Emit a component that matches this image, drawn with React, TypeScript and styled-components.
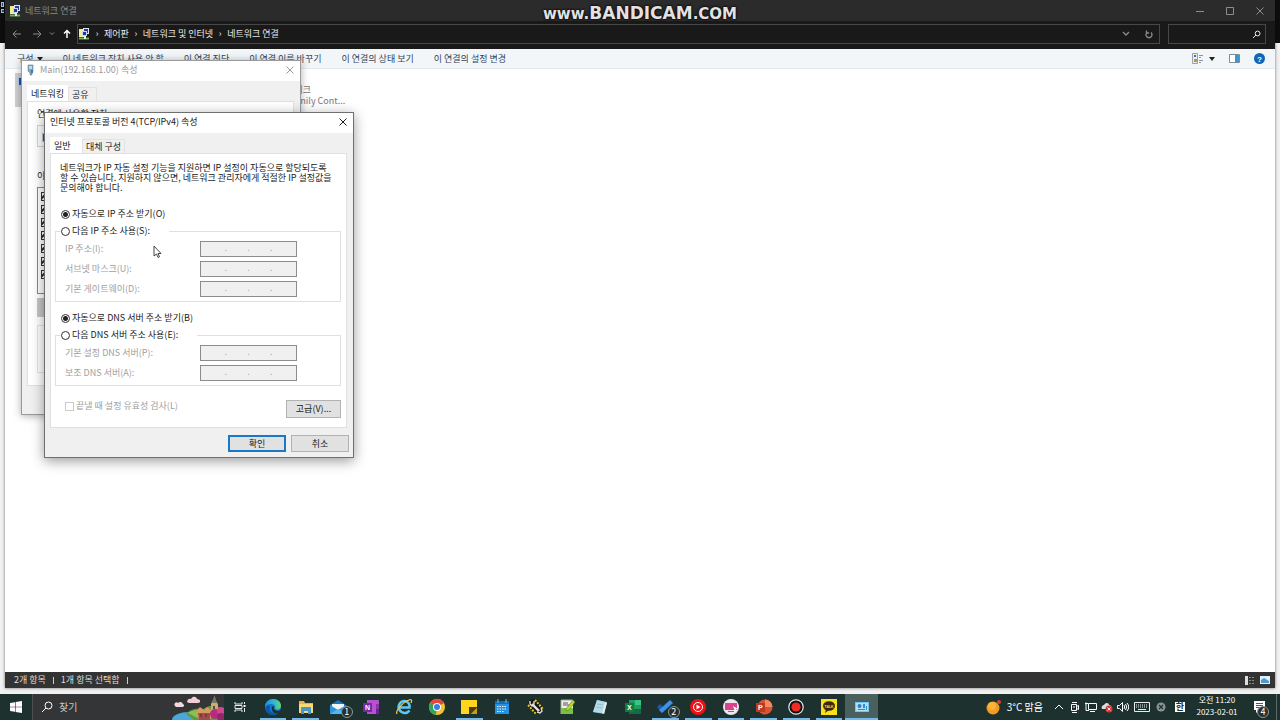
import React from "react";
import styled, { createGlobalStyle, css } from "styled-components";

const GlobalStyle = createGlobalStyle`
  *, *::before, *::after { box-sizing: border-box; }
  body {
    margin: 0;
    font-family: "Noto Sans CJK KR", "Noto Sans", sans-serif;
    font-size: 9px;
    line-height: 12px;
    color: #1a1a1a;
  }
  button, input { font: inherit; color: inherit; margin: 0; padding: 0; }
  button { background: none; border: 0; }
  svg { display: block; flex: none; }
`;

/* ---------- desktop ---------- */

const Desktop = styled.div`
  position: relative;
  min-height: 100vh;
  display: flex;
  flex-direction: column;
  overflow: hidden;
  background: linear-gradient(#0e0e0e 43px, #f1f1f2 43px);
`;

const DesktopSliver = styled.svg`
  position: absolute;
  left: 0;
  top: 1px;
`;

const Watermark = styled.div`
  position: absolute;
  z-index: 5;
  top: 3px;
  left: 0;
  right: 0;
  text-align: center;
  font-family: "DejaVu Sans", sans-serif;
  font-weight: bold;
  font-size: 15px;
  line-height: 20px;
  color: #e2e2e2;
  text-shadow: 0 0 3px #000, 0 0 2px #000;
  pointer-events: none;
`;

const WatermarkBrand = styled.span`
  font-size: 17px;
`;

/* ---------- explorer window ---------- */

const Explorer = styled.main`
  flex: 1;
  margin: 0 5px 6px;
  display: flex;
  flex-direction: column;
  background: #fff;
  box-shadow: 0 0 3px rgba(0, 0, 0, 0.55);
`;

const TitleBar = styled.header`
  height: 21px;
  display: flex;
  align-items: center;
  padding-left: 5px;
  gap: 4px;
  background: #2b2b2b;
  color: #8b8b8b;
`;

const Spacer = styled.div`
  flex: 1;
`;

const CaptionButtons = styled.div`
  display: flex;
`;

const CaptionButton = styled.button`
  width: 30px;
  height: 20px;
  display: grid;
  place-items: center;
  color: #8d8d8d;
`;

const AddressRow = styled.div`
  height: 28px;
  display: flex;
  align-items: center;
  padding: 0 9px 2px 2px;
  background: #191919;
  color: #e8e8e8;
`;

const NavButton = styled.button<{ $narrow?: boolean; $dim?: boolean }>`
  width: ${(p) => (p.$narrow ? 10 : 20)}px;
  height: 20px;
  display: grid;
  place-items: center;
  color: ${(p) => (p.$dim ? "#8c8c8c" : "#ffffff")};
`;

const AddressBox = styled.nav`
  flex: 1;
  height: 20px;
  display: flex;
  align-items: center;
  padding-left: 1px;
  gap: 3px;
  border: 1px solid #484848;
  margin-right: 8px;
`;

const Crumb = styled.a`
  color: inherit;
  text-decoration: none;
`;

const CrumbArrow = styled.span`
  width: 8px;
  text-align: center;
`;

const SearchBox = styled.label`
  width: 98px;
  height: 20px;
  display: flex;
  align-items: center;
  padding: 0 4px;
  border: 1px solid #484848;
`;

const BareInput = styled.input`
  flex: 1;
  min-width: 0;
  border: 0;
  outline: 0;
  background: transparent;
  &::placeholder { color: #c9c9c9; opacity: 1; }
`;

const CommandBar = styled.div`
  height: 20px;
  display: flex;
  align-items: center;
  gap: 20px;
  padding: 0 10px 0 12px;
  background: #f2f6f9;
  border-bottom: 1px solid #e6eaee;
  color: #33445c;
`;

const Command = styled.button<{ $gap?: number }>`
  display: flex;
  align-items: center;
  gap: ${(p) => p.$gap ?? 3}px;
  white-space: nowrap;
`;

const CommandIcons = styled.div`
  display: flex;
  align-items: center;
  gap: 14px;
`;

const ItemView = styled.section`
  flex: 1;
  display: flex;
  align-items: flex-start;
  padding: 4px 10px;
  gap: 22px;
`;

const ConnectionItem = styled.article<{ $selected?: boolean }>`
  width: 160px;
  height: 34px;
  display: flex;
  gap: 4px;
  padding: 0 2px;
  line-height: 11px;
  color: #777;
  white-space: nowrap;
  background: ${(p) => (p.$selected ? "#d0d0d0" : "transparent")};
`;

const StatusBar = styled.footer`
  height: 16px;
  display: flex;
  align-items: center;
  gap: 7px;
  padding: 0 5px 0 9px;
  background: #333;
  color: #dedede;
`;

const StatusRule = styled.i`
  width: 1px;
  height: 7px;
  background: #cfcfcf;
`;

const ViewModes = styled.div`
  display: flex;
  align-items: center;
  gap: 4px;
`;

/* ---------- dialogs ---------- */

const Dialog = styled.section<{ $x: number; $y: number; $w: number; $h: number; $active?: boolean }>`
  position: absolute;
  left: ${(p) => p.$x}px;
  top: ${(p) => p.$y}px;
  width: ${(p) => p.$w}px;
  min-height: ${(p) => p.$h}px;
  display: flex;
  flex-direction: column;
  border: 1px solid ${(p) => (p.$active ? "#6f6f6f" : "#9a9a9a")};
  background: #f0f0f0;
  box-shadow: ${(p) => (p.$active ? "0 3px 12px rgba(0,0,0,.4)" : "0 1px 8px rgba(0,0,0,.32)")};
`;

const DialogTitle = styled.header<{ $active?: boolean }>`
  height: 20px;
  display: flex;
  align-items: center;
  justify-content: space-between;
  padding: 0 6px 2px 5px;
  background: #fff;
  color: ${(p) => (p.$active ? "#1a1a1a" : "#999")};
`;

const TitleText = styled.h2`
  display: flex;
  align-items: center;
  gap: 5px;
  margin: 0;
  font-size: 9px;
  font-weight: normal;
`;

const Tabs = styled.div`
  display: flex;
  align-items: flex-end;
  margin: 4px 5px 0;
`;

const Tab = styled.button<{ $on?: boolean; $w?: number }>`
  width: ${(p) => (p.$w ? p.$w + "px" : "auto")};
  height: ${(p) => (p.$on ? 16 : 14)}px;
  padding: 0 3px;
  background: ${(p) => (p.$on ? "#fff" : "#f0f0f0")};
  border: 1px solid ${(p) => (p.$on ? "#fff" : "#e2e2e2")};
  border-bottom: 0;
  text-align: left;
  white-space: nowrap;
`;

const Page = styled.div`
  margin: 0 6px 0 5px;
  border: 1px solid #e0e0e0;
  background: #fff;
`;

const IpPage = styled(Page)`
  padding: 9px 5px 9px 4px;
`;

const Intro = styled.p`
  margin: 0 0 15px 5px;
  line-height: 10px;
  white-space: nowrap;
`;

const Choice = styled.label<{ $disabled?: boolean }>`
  display: flex;
  align-items: center;
  gap: 2px;
  height: 12px;
  color: ${(p) => (p.$disabled ? "#a0a0a0" : "inherit")};
  white-space: nowrap;
`;

const LoneChoice = styled(Choice)`
  margin-left: 6px;
`;

const Radio = styled.input.attrs({ type: "radio" })`
  appearance: none;
  width: 9px;
  height: 9px;
  border: 1px solid #333;
  border-radius: 50%;
  background: #fff;
  &:checked { background: radial-gradient(circle, #222 2px, #fff 3px); }
`;

const Check = styled.input.attrs({ type: "checkbox" })`
  appearance: none;
  width: 9px;
  height: 9px;
  flex: none;
  border: 1px solid #333;
  background: #fff;
  &:checked { background: linear-gradient(135deg, #fff 2px, #222 3px, #222 4px, #fff 5px); }
  &:disabled { border-color: #ccc; }
`;

const Group = styled.fieldset`
  min-width: 0;
  margin: 5px 0 10px;
  padding: 4px 4px 4px 9px;
  border: 1px solid #e0e0e0;
  display: flex;
  flex-direction: column;
  gap: 4px;
`;

const GroupLegend = styled.legend`
  margin-left: -4px;
  padding: 0 19px 0 0;
`;

const FieldRow = styled.label`
  display: grid;
  grid-template-columns: 135px 97px;
  align-items: center;
  color: #a0a0a0;
`;

const AddressField = styled.input`
  height: 16px;
  padding-bottom: 3px;
  border: 1px solid #8c8c8c;
  background: #f0f0f0;
  text-align: center;
  color: #aaa;
`;

const PageBottom = styled.div`
  display: flex;
  justify-content: space-between;
  align-items: flex-start;
  margin-top: 14px;
  padding-left: 10px;
`;

const buttonFace = css`
  border: 1px solid #b2b2b2;
  background: #e1e1e1;
`;

const PushButton = styled.button<{ $default?: boolean; $wide?: boolean }>`
  ${buttonFace}
  width: ${(p) => (p.$wide ? 58 : 55)}px;
  height: ${(p) => (p.$wide ? 17 : 18)}px;
  line-height: 12px;
  ${(p) => p.$default && "border: 2px solid #1a78c8;"}
`;

const DialogActions = styled.div`
  display: flex;
  justify-content: flex-end;
  gap: 5px;
  padding: 7px 4px 4px;
`;

const AdapterPage = styled(Page)`
  height: 285px;
  padding: 6px 9px;
`;

const DeviceBox = styled.div`
  height: 22px;
  margin: 5px 0 23px;
  padding: 3px;
  border: 1px solid #cfd6dc;
`;

const ComponentList = styled.div`
  height: 107px;
  margin-top: 5px;
  padding: 2px 3px;
  display: flex;
  flex-direction: column;
  gap: 1px;
  overflow: hidden;
  border: 1px solid #888;
`;

const InstallButton = styled.button`
  display: block;
  width: 78px;
  height: 19px;
  margin-top: 4px;
  background: #c6c6c6;
`;

const Description = styled.div`
  height: 48px;
  margin-top: 8px;
  border: 1px solid #e4e4e4;
`;

const Pointer = styled.svg`
  position: absolute;
  z-index: 4;
  left: 153px;
  top: 245px;
`;

/* ---------- taskbar ---------- */

const Taskbar = styled.footer`
  height: 26px;
  display: flex;
  background: #1d312e;
  color: #fff;
`;

const StartButton = styled.button`
  width: 32px;
  display: grid;
  place-items: center;
`;

const TaskSearch = styled.label`
  width: 192px;
  display: flex;
  align-items: center;
  gap: 6px;
  padding-left: 8px;
  background: #333536;
  border-left: 1px solid #4b504f;
  font-size: 10px;
`;

const Apps = styled.div`
  flex: 0 1 654px;
  display: flex;
`;

const AppButton = styled.button<{ $running?: boolean; $active?: boolean }>`
  position: relative;
  flex: 1;
  display: grid;
  place-items: center;
  background: ${(p) => (p.$active ? "#49605c" : "transparent")};
  &::after {
    content: "";
    position: absolute;
    left: ${(p) => (p.$active ? 0 : 3)}px;
    right: ${(p) => (p.$active ? 0 : 3)}px;
    bottom: 0;
    height: 2px;
    background: ${(p) => (p.$running || p.$active ? "#76b9ed" : "transparent")};
  }
`;

const Badge = styled.span<{ $inset?: number }>`
  position: absolute;
  right: ${(p) => p.$inset ?? 2}px;
  bottom: 2px;
  width: 12px;
  height: 12px;
  border: 1px solid #8c9896;
  border-radius: 50%;
  background: #26302f;
  font-size: 9px;
  line-height: 10px;
  text-align: center;
`;

const Tray = styled.div`
  display: flex;
  margin-left: auto;
`;

const Weather = styled.button`
  display: flex;
  align-items: center;
  gap: 6px;
  padding-right: 8px;
  font-size: 10px;
  white-space: nowrap;
`;

const TrayButton = styled.button<{ $w?: number }>`
  position: relative;
  width: ${(p) => p.$w ?? 16}px;
  display: grid;
  place-items: center;
`;

const Ime = styled.span`
  width: 10px;
  height: 10px;
  background: #fff;
  color: #1d312e;
  font-weight: bold;
  line-height: 9px;
  text-align: center;
`;

const Clock = styled.time`
  width: 52px;
  font-size: 8px;
  text-align: center;
`;

const ShowDesktop = styled.button`
  width: 4px;
  border-left: 1px solid #5c6b68;
`;

/* ---------- icons ---------- */

const NetworkIcon = () => (
  <svg width="11" height="12" viewBox="0 0 11 12">
    <path d="M0 1h6v8H0z" fill="#f2ec9c" />
    <path d="M4 0h6v6H4z" fill="#dbe5f5" />
    <path d="M5 1h4v4H5z" fill="#263d9f" />
    <path d="M3 3h5v5H3z" fill="#c8d8f0" />
    <path d="M4 4h3v3H4z" fill="#1d3b9c" />
    <path d="M0 9.500h10v2H0z" fill="#6db65b" />
    <path d="M5 8h2v3H5z" fill="#eee" />
  </svg>
);

const ScreenIcon = () => (
  <svg width="12" height="14" viewBox="0 0 12 14">
    <path d="M1 4h11v9H1z" fill="#b9cbe6" />
    <path d="M2 5h9v7H2z" fill="#2350b8" />
  </svg>
);

const AdapterIcon = () => (
  <svg width="8" height="12" viewBox="0 0 8 12">
    <path d="M1 1h5v6l-1 2v2H3V9L1 7z" fill="#87a5b8" stroke="#668193" strokeWidth=".6" />
    <path d="M2 2h3v3H2z" fill="#b9dcf0" />
    <path d="M4 6h2v3H4z" fill="#347eaf" />
  </svg>
);

const Cross = () => (
  <svg width="8" height="8" viewBox="0 0 8 8" fill="none" stroke="currentColor">
    <path d="M.5.5l7 7M7.500.5l-7 7" />
  </svg>
);

const Stroke = ({ d, w = 12, h = 12, sw = 1 }: { d: string; w?: number; h?: number; sw?: number }) => (
  <svg width={w} height={h} viewBox={`0 0 ${w} ${h}`} fill="none" stroke="currentColor" strokeWidth={sw}>
    <path d={d} />
  </svg>
);

const DownTriangle = () => (
  <svg width="6" height="4" viewBox="0 0 6 4">
    <path d="M0 0h6L3 4z" fill="#222" />
  </svg>
);

const SearchScene = () => (
  <svg width="52" height="26" viewBox="0 0 52 26">
    <ellipse cx="17" cy="26" rx="17" ry="8" fill="#4aa7d8" />
    <path d="M14 20c4-5 10-6 17-5l6-3 14 2v12H22z" fill="#5f9a41" />
    <path d="M16 19c6-4 9-3 13-1l-2 6c-5-1-6-3-11-5z" fill="#8bc150" />
    <path d="M24 17l4-4 4 3 3-3 4 3v9H26z" fill="#d59a62" />
    <path d="M26 19h12v7H27z" fill="#a5494f" />
    <path d="M39 10l3-6 4 6v11h-7z" fill="#c9ae73" />
    <path d="M40 9l2.500-8L45 9z" fill="#77765e" />
    <path d="M41 12h2v3h-2zM28 20h2v3h-2zM33 20h2v3h-2z" fill="#664536" />
    <circle cx="43" cy="20" r="5" fill="#b52d7c" />
    <circle cx="49" cy="17" r="4" fill="#d04693" />
    <circle cx="49" cy="23" r="4" fill="#922867" />
    <path d="M3 12a2 2 0 013-3 3 3 0 015 1c2 1 1 3-1 3H4z" fill="#f1d9dd" />
    <path d="M15 8c0-3 3-4 4-3 2-4 6-2 6 0 4 0 4 4 1 4h-9z" fill="#f3cdd5" />
  </svg>
);

const AppSvg = ({ children }: { children: React.ReactNode }) => (
  <svg width="18" height="18" viewBox="0 0 18 18">{children}</svg>
);

const letter = { fontFamily: "Liberation Sans", fontWeight: "bold", fill: "#fff" } as const;

type App = { name: string; icon: React.ReactNode; running?: boolean; active?: boolean; badge?: string };

const apps: App[] = [
  {
    name: "작업 보기",
    icon: (
      <AppSvg>
        <path d="M4 4v2h7V4M4 14v-2h7v2M4 7.500h7v3H4zM13.500 4v2M13.500 10v4" fill="none" stroke="#e5e9e8" />
        <path d="M12.500 7h2v2h-2z" fill="#fff" />
      </AppSvg>
    ),
  },
  {
    name: "Microsoft Edge",
    running: true,
    icon: (
      <AppSvg>
        <defs>
          <linearGradient id="edgeTop" x2="1">
            <stop stopColor="#258ee1" />
            <stop offset=".6" stopColor="#2fbad0" />
            <stop offset="1" stopColor="#66d65b" />
          </linearGradient>
        </defs>
        <circle cx="9" cy="9" r="8" fill="#1374c9" />
        <path d="M10 8.500c-1 3 2 5.500 7 4l1 3-4 1c-4 0-7-4-6-8z" fill="#1d312e" />
        <path d="M6 8c-2 4 1 8 8 7-4 4-12 2-12-5 0-2 2-3 4-2z" fill="#0b56ab" />
        <path d="M1 9C1 4 5 1 9 1c5 0 8 3 8 7 0 3-3 4-6 3 1-2 0-5-4-5-3 0-5 1-6 3z" fill="url(#edgeTop)" />
      </AppSvg>
    ),
  },
  {
    name: "파일 탐색기",
    running: true,
    icon: (
      <AppSvg>
        <path d="M2 3h5l1 2h8v10H2z" fill="#eab344" />
        <path d="M2 6h14v9H2z" fill="#fbd972" />
        <path d="M4 10q0-1 1-1h8q1 0 1 1v6h-3v-3H7v3H4z" fill="#4a96c9" />
      </AppSvg>
    ),
  },
  {
    name: "메일",
    badge: "1",
    icon: (
      <AppSvg>
        <path d="M1 7l8-5 8 5v9H1z" fill="#1b74c6" />
        <path d="M3 6h12v6H3z" fill="#f1f6fa" />
        <path d="M1 7l8 5 8-5v9H1z" fill="#2e94df" />
        <path d="M1 16l8-5 8 5z" fill="#55b6ef" />
      </AppSvg>
    ),
  },
  {
    name: "OneNote",
    icon: (
      <AppSvg>
        <path d="M5 2h11q1 0 1 1v13H5z" fill="#b554ce" />
        <path d="M14 6h3v5h-3z" fill="#8b34ad" />
        <path d="M14 11h3v5h-3z" fill="#6e2297" />
        <path d="M1 5h9v9H1z" fill="#7a25a3" />
        <text x="3" y="12" fontSize="7" {...letter}>N</text>
      </AppSvg>
    ),
  },
  {
    name: "Internet Explorer",
    icon: (
      <AppSvg>
        <path d="M14.500 12.500A6 6 0 119 3c4 0 6 3 5.500 6.500H5" fill="none" stroke="#5fc7f3" strokeWidth="2.600" />
        <path d="M2 16C0 13 8 4 14 2c3-1 3 1 2 3" fill="none" stroke="#f0c64a" strokeWidth="1.300" />
      </AppSvg>
    ),
  },
  {
    name: "Chrome",
    icon: (
      <AppSvg>
        <circle cx="9" cy="9" r="8" fill="#f4c430" />
        <path d="M9 9L2 5a8 8 0 0114 0z" fill="#e0483b" />
        <path d="M9 9L2 5a8 8 0 006 12z" fill="#35a455" />
        <circle cx="9" cy="9" r="4" fill="#fff" />
        <circle cx="9" cy="9" r="3" fill="#3c7de0" />
      </AppSvg>
    ),
  },
  {
    name: "스티커 메모",
    running: true,
    icon: (
      <AppSvg>
        <path d="M1 2h16v9l-5 5H1z" fill="#ffd51e" />
        <path d="M9 9h8v1l-6 6H9z" fill="#4a3b1b" />
        <path d="M17 10.500v5.500h-5.500z" fill="#c79c17" />
      </AppSvg>
    ),
  },
  {
    name: "일정",
    icon: (
      <AppSvg>
        <path d="M2 3h14v13H2z" fill="#2892e2" />
        <path d="M2 3h14v3H2z" fill="#156bb8" />
        <path d="M5 1v4M13 1v4" stroke="#63c1f7" />
        <path d="M4 8.500h10M4 11h10M4 13.500h7" stroke="#e8f6ff" strokeWidth="1.200" strokeDasharray="1.500 1" />
      </AppSvg>
    ),
  },
  {
    name: "도구",
    icon: (
      <AppSvg>
        <path d="M9 1l8 8-4 6-4 1-8-8 3-6z" fill="#15150f" />
        <path d="M2 7l8 9M9 2l8 9" stroke="#e3c827" strokeWidth="2" strokeDasharray="2 1.200" />
        <path d="M6 6l7 7" stroke="#e6e6e6" strokeWidth="2.400" />
        <path d="M4 3v3l2 2 2-2V3M11 14l3 1 2-2-1-3" fill="none" stroke="#dcdcdc" strokeWidth="1.400" />
      </AppSvg>
    ),
  },
  {
    name: "Notepad++",
    icon: (
      <AppSvg>
        <path d="M3 2h12v14H3z" fill="#eef0e8" />
        <path d="M3 10h12v6H3z" fill="#78c143" />
        <path d="M5 5h5M5 7h6" stroke="#555" />
        <path d="M3 16V2h12" fill="none" stroke="#9ca493" />
        <path d="M8 11l7-9 2 2-6 8-3 1z" fill="#b8d92b" stroke="#567b2a" strokeWidth=".6" />
      </AppSvg>
    ),
  },
  {
    name: "메모장",
    icon: (
      <AppSvg>
        <path d="M6 2l10 2-3 12-11-2z" fill="#80b8cf" />
        <path d="M6 2l8 2-3 11-9-1z" fill="#b3dae7" />
        <path d="M14 4l2 1-3 11-2-1z" fill="#e6eef0" />
        <path d="M6 6l6 1M5 9l6 1" stroke="#80adbf" strokeWidth=".6" />
      </AppSvg>
    ),
  },
  {
    name: "Excel",
    icon: (
      <AppSvg>
        <path d="M5 2h12v14H5z" fill="#1f9d61" />
        <path d="M11 2h6v5h-6z" fill="#39c481" />
        <path d="M5 11h12v5H5z" fill="#176b43" />
        <path d="M1 5h9v9H1z" fill="#107c41" />
        <text x="3" y="12" fontSize="7" {...letter}>X</text>
      </AppSvg>
    ),
  },
  {
    name: "To Do",
    running: true,
    badge: "2",
    icon: (
      <AppSvg>
        <path d="M1 9l3-3 5 5-3 4z" fill="#1c57a9" />
        <path d="M6 15l-3-3L14 2l3 3z" fill="#3d91e7" />
      </AppSvg>
    ),
  },
  {
    name: "YouTube Music",
    running: true,
    icon: (
      <AppSvg>
        <circle cx="9" cy="9" r="8" fill="#ee1118" />
        <circle cx="9" cy="9" r="4.500" fill="none" stroke="#fff" />
        <path d="M7.500 6.500v5l4-2.500z" fill="#fff" />
      </AppSvg>
    ),
  },
  {
    name: "화면 공유",
    running: true,
    icon: (
      <AppSvg>
        <circle cx="9" cy="9" r="8" fill="#eee6eb" />
        <path d="M3 5h12v7H3z" fill="#d9438c" />
        <path d="M6 13h6v1H6z" fill="#777" />
        <path d="M11 8l5 3-2 .5-1 2z" fill="#fff" />
      </AppSvg>
    ),
  },
  {
    name: "PowerPoint",
    running: true,
    icon: (
      <AppSvg>
        <circle cx="10" cy="9" r="7.500" fill="#d95432" />
        <path d="M10 1.500A7.500 7.500 0 0117.500 9H10z" fill="#f28a65" />
        <path d="M1 5h9v9H1z" fill="#bb3a1d" />
        <text x="3" y="12" fontSize="7" {...letter}>P</text>
      </AppSvg>
    ),
  },
  {
    name: "Bandicam",
    running: true,
    icon: (
      <AppSvg>
        <circle cx="9" cy="9" r="7.200" fill="#111" stroke="#e8e8e8" strokeWidth="1.200" />
        <circle cx="9" cy="9" r="4.600" fill="#f02a24" />
      </AppSvg>
    ),
  },
  {
    name: "카카오톡",
    running: true,
    icon: (
      <AppSvg>
        <path d="M1 1h16v16H1z" fill="#f8e11a" />
        <ellipse cx="9" cy="8" rx="6" ry="4.800" fill="#3b2712" />
        <path d="M6 11l-1 4 4-3z" fill="#3b2712" />
        <text x="4.500" y="9.500" fontSize="3.500" {...letter} fill="#f8e11a">TALK</text>
      </AppSvg>
    ),
  },
  {
    name: "네트워크 연결",
    active: true,
    icon: (
      <AppSvg>
        <path d="M2 4h14v10H2z" fill="#75c5ee" />
        <path d="M3 5h12v8H3z" fill="#b0e0f7" />
        <circle cx="6.500" cy="8" r="2" fill="#2c80bd" />
        <path d="M10 6h2v4h-2zM13 8h1v4h-1zM5 11h7v1H5z" fill="#2e8dcc" />
      </AppSvg>
    ),
  },
];

/* ---------- parts ---------- */

const DOTS = `.${" ".repeat(10)}.${" ".repeat(10)}.`;

const IpField = ({ label }: { label: string }) => (
  <FieldRow>
    {label}
    <AddressField disabled defaultValue={DOTS} />
  </FieldRow>
);

const components = ["클라이언트", "파일 및 프린터 공유", "QoS 패킷", "TCP/IPv4", "멀티플렉서", "LLDP", "TCP/IPv6"];

const AdapterDialog = () => (
  <Dialog $x={21} $y={60} $w={280} $h={355} aria-label="Main(192.168.1.00) 속성">
    <DialogTitle>
      <TitleText>
        <AdapterIcon />
        Main(192.168.1.00) 속성
      </TitleText>
      <button aria-label="닫기"><Cross /></button>
    </DialogTitle>
    <Tabs>
      <Tab $on $w={41}>네트워킹</Tab>
      <Tab $w={29}>공유</Tab>
    </Tabs>
    <AdapterPage>
      연결에 사용할 장치:
      <DeviceBox><ScreenIcon /></DeviceBox>
      이 연결에
      <ComponentList>
        {components.map((c) => (
          <Choice key={c}>
            <Check defaultChecked aria-label={c} />
          </Choice>
        ))}
      </ComponentList>
      <InstallButton aria-label="설치" />
      <Description />
    </AdapterPage>
  </Dialog>
);

const IpDialog = () => (
  <Dialog $x={44} $y={112} $w={310} $h={346} $active aria-label="TCP/IPv4 속성">
    <DialogTitle $active>
      <TitleText>인터넷 프로토콜 버전 4(TCP/IPv4) 속성</TitleText>
      <button aria-label="닫기"><Cross /></button>
    </DialogTitle>
    <Tabs>
      <Tab $on $w={32}>일반</Tab>
      <Tab>대체 구성</Tab>
    </Tabs>
    <IpPage>
      <Intro>
        네트워크가 IP 자동 설정 기능을 지원하면 IP 설정이 자동으로 할당되도록
        <br />할 수 있습니다. 지원하지 않으면, 네트워크 관리자에게 적절한 IP 설정값을
        <br />문의해야 합니다.
      </Intro>
      <LoneChoice><Radio name="ip" defaultChecked />자동으로 IP 주소 받기(O)</LoneChoice>
      <Group>
        <GroupLegend>
          <Choice><Radio name="ip" />다음 IP 주소 사용(S):</Choice>
        </GroupLegend>
        <IpField label="IP 주소(I):" />
        <IpField label="서브넷 마스크(U):" />
        <IpField label="기본 게이트웨이(D):" />
      </Group>
      <LoneChoice><Radio name="dns" defaultChecked />자동으로 DNS 서버 주소 받기(B)</LoneChoice>
      <Group>
        <GroupLegend>
          <Choice><Radio name="dns" />다음 DNS 서버 주소 사용(E):</Choice>
        </GroupLegend>
        <IpField label="기본 설정 DNS 서버(P):" />
        <IpField label="보조 DNS 서버(A):" />
      </Group>
      <PageBottom>
        <Choice $disabled><Check disabled />끝낼 때 설정 유효성 검사(L)</Choice>
        <PushButton>고급(V)...</PushButton>
      </PageBottom>
    </IpPage>
    <DialogActions>
      <PushButton $wide $default>확인</PushButton>
      <PushButton $wide>취소</PushButton>
    </DialogActions>
  </Dialog>
);

const TrayArea = () => (
  <Tray>
    <Weather>
      <svg width="15" height="16" viewBox="0 0 15 16">
        <circle cx="7" cy="9" r="6.500" fill="#f39a1f" />
        <circle cx="6" cy="7" r="4" fill="#f8b43a" />
        <circle cx="13" cy="3" r="2" fill="#d8432a" />
      </svg>
      3°C 맑음
    </Weather>
    <TrayButton aria-label="숨겨진 아이콘"><Stroke w={10} h={6} d="M1 5l4-4 4 4" /></TrayButton>
    <TrayButton aria-label="카메라"><Stroke d="M3 1.500h5M2.500 3.500h5v6h-5zM7.500 5.500l2-1v4l-2-1M3 11.500h5M4 6h2" /></TrayButton>
    <TrayButton aria-label="네트워크"><Stroke d="M3.500 2.500h8v6h-8zM1 1.500v4M0 2.500h3M5 10.500h5M1 5.500v4h3" /></TrayButton>
    <TrayButton aria-label="OneDrive">
      <svg width="12" height="12" viewBox="0 0 12 12">
        <path d="M1 8c-1-3 1-4 2-4 2-3 5-2 5 0 2 0 3 2 2 4z" fill="#d9dede" />
        <circle cx="8" cy="8" r="3.500" fill="#dc3636" />
        <path d="M6.500 6.500l3 3m0-3l-3 3" stroke="#fff" strokeWidth=".9" />
      </svg>
    </TrayButton>
    <TrayButton aria-label="볼륨"><Stroke d="M.5 4.500h2l3-3v9l-3-3h-2zM7 4q1.500 2 0 4M8.500 3q2.500 3 0 6M10 2q3.500 4 0 8" /></TrayButton>
    <TrayButton $w={22} aria-label="터치 키보드">
      <svg width="16" height="10" viewBox="0 0 16 10" fill="none" stroke="#e8ecec">
        <path d="M.5.5h15v9H.5z" />
        <path d="M2 3h12M2 5h12" strokeDasharray="1 1" />
        <path d="M4 7.500h8" />
      </svg>
    </TrayButton>
    <TrayButton aria-label="상태">
      <svg width="10" height="10" viewBox="0 0 10 10">
        <circle cx="5" cy="5" r="4.500" fill="#8a9492" />
        <path d="M3 3l4 4m0-4L3 7" stroke="#1d312e" strokeWidth="1.200" />
      </svg>
    </TrayButton>
    <TrayButton $w={22} aria-label="입력기"><Ime>한</Ime></TrayButton>
    <Clock>오전 11:20<br />2023-02-01</Clock>
    <TrayButton $w={33} aria-label="알림">
      <svg width="14" height="14" viewBox="0 0 14 14">
        <path d="M1 1h11v9H6l-3 3v-3H1z" fill="#fff" />
        <path d="M3 3.500h7M3 5.500h7M3 7.500h5" stroke="#1d312e" strokeWidth=".8" />
      </svg>
      <Badge $inset={7}>4</Badge>
    </TrayButton>
    <ShowDesktop aria-label="바탕 화면 보기" />
  </Tray>
);

export default function App() {
  return (
    <Desktop>
      <GlobalStyle />
      <DesktopSliver width="5" height="14" viewBox="0 0 5 14">
        <path d="M1 1h3v5H1zM1 8h3v4H1z" fill="#a9b9da" />
        <path d="M2 2h1v3H2zM2 9h2v2H2z" fill="#24428c" />
      </DesktopSliver>
      <Watermark>
        www.<WatermarkBrand>BANDICAM</WatermarkBrand>.COM
      </Watermark>

      <Explorer>
        <TitleBar>
          <NetworkIcon />
          네트워크 연결
          <Spacer />
          <CaptionButtons>
            <CaptionButton aria-label="최소화"><Stroke w={8} h={8} d="M0 4.500h8" /></CaptionButton>
            <CaptionButton aria-label="최대화"><Stroke w={8} h={8} d="M.5.500h7v7h-7z" /></CaptionButton>
            <CaptionButton aria-label="닫기"><Cross /></CaptionButton>
          </CaptionButtons>
        </TitleBar>
        <AddressRow>
          <NavButton $dim aria-label="뒤로"><Stroke w={10} h={8} d="M9 4H1M4.500.5L1 4l3.500 3.500" /></NavButton>
          <NavButton $dim aria-label="앞으로"><Stroke w={10} h={8} d="M1 4h8M5.500.5L9 4 5.500 7.500" /></NavButton>
          <NavButton $narrow $dim aria-label="최근 위치"><Stroke w={6} h={4} d="M1 .5l2 2 2-2" /></NavButton>
          <NavButton aria-label="위로"><Stroke w={8} h={10} sw={1.5} d="M4 9V1.500M1 4.500l3-3 3 3" /></NavButton>
          <AddressBox>
            <NetworkIcon />
            <CrumbArrow>›</CrumbArrow>
            <Crumb href="#">제어판</Crumb>
            <CrumbArrow>›</CrumbArrow>
            <Crumb href="#">네트워크 및 인터넷</Crumb>
            <CrumbArrow>›</CrumbArrow>
            <Crumb href="#">네트워크 연결</Crumb>
            <Spacer />
            <NavButton $dim aria-label="이전 위치"><Stroke w={8} h={6} sw={1.3} d="M1 1l3 3 3-3" /></NavButton>
            <NavButton $dim aria-label="새로 고침"><Stroke w={8} h={9} sw={1.3} d="M2 2.500a3 3 0 104 0M1.500.500v2.500H4" /></NavButton>
          </AddressBox>
          <SearchBox>
            <BareInput aria-label="검색" />
            <Stroke w={9} h={9} d="M1 8l3-3M8 3.500a2.400 2.400 0 11-4.800 0 2.400 2.400 0 014.800 0z" />
          </SearchBox>
        </AddressRow>
        <CommandBar>
          <Command>구성 <DownTriangle /></Command>
          <Command>이 네트워크 장치 사용 안 함</Command>
          <Command>이 연결 진단</Command>
          <Command>이 연결 이름 바꾸기</Command>
          <Command>이 연결의 상태 보기</Command>
          <Command>이 연결의 설정 변경</Command>
          <Spacer />
          <CommandIcons>
            <Command $gap={6} aria-label="보기">
              <svg width="11" height="11" viewBox="0 0 11 11">
                <path d="M.5.500h5v10h-5z" fill="#e9edf0" stroke="#9aa3ab" />
                <path d="M2 2h2v2H2z" fill="#3c72b5" />
                <path d="M2 6h3v3H2z" fill="#b59a44" />
                <path d="M7 2.500h4M7 4.500h2M7 7.500h4M7 9.500h2" stroke="#8793a0" />
              </svg>
              <DownTriangle />
            </Command>
            <Command aria-label="미리 보기 창">
              <svg width="11" height="9" viewBox="0 0 11 9">
                <path d="M.5.500h10v8H.5z" fill="#fff" stroke="#7b8c9b" />
                <path d="M6 1h4v7H6z" fill="#3d96c8" />
              </svg>
            </Command>
            <Command aria-label="도움말">
              <svg width="11" height="11" viewBox="0 0 11 11">
                <circle cx="5.500" cy="5.500" r="5.500" fill="#0f67b5" />
                <text x="5.500" y="8.500" fontSize="8" textAnchor="middle" {...letter}>?</text>
              </svg>
            </Command>
          </CommandIcons>
        </CommandBar>
        <ItemView>
          <ConnectionItem $selected><ScreenIcon /></ConnectionItem>
          <ConnectionItem>
            <NetworkIcon />
            <div>
              이더넷
              <br />식별되지 않은 새 네트워크
              <br />Realtek PCIe GBE Family Cont...
            </div>
          </ConnectionItem>
        </ItemView>
        <StatusBar>
          2개 항목<StatusRule />1개 항목 선택함<StatusRule />
          <Spacer />
          <ViewModes>
            <svg width="11" height="9" viewBox="0 0 11 9">
              <path d="M0 0h3v9H0z" fill="#ddd" />
              <path d="M4 1.500h6M4 4.500h6M4 7.500h6" stroke="#888" strokeDasharray="2 1" />
            </svg>
            <svg width="10" height="8" viewBox="0 0 10 8">
              <path d="M0 0h10v8H0z" fill="#dff0fa" />
              <path d="M1 4l3-2 5 3v2H1z" fill="#4d9ac9" />
            </svg>
          </ViewModes>
        </StatusBar>
      </Explorer>

      <AdapterDialog />
      <IpDialog />

      <Pointer width="9" height="14" viewBox="0 0 9 14">
        <path d="M1 1v10l2.500-2 1.500 3.500 1.500-.7L5 8.500h3z" fill="#fff" stroke="#333" strokeWidth=".9" />
      </Pointer>

      <Taskbar>
        <StartButton aria-label="시작">
          <svg width="12" height="12" viewBox="0 0 12 12">
            <path d="M0 2l5-.8v4.500H0zM5.600 1L12 0v5.700H5.600zM0 6.300h5v4.500L0 10zM5.600 6.300H12V12l-6.400-1z" fill="#fff" />
          </svg>
        </StartButton>
        <TaskSearch>
          <Stroke w={12} h={12} d="M1 11l4-4M11 4.500a3.500 3.500 0 11-7 0 3.500 3.500 0 017 0z" />
          <BareInput placeholder="찾기" />
          <SearchScene />
        </TaskSearch>
        <Apps>
          {apps.map((a) => (
            <AppButton key={a.name} aria-label={a.name} $running={a.running} $active={a.active}>
              {a.icon}
              {a.badge && <Badge>{a.badge}</Badge>}
            </AppButton>
          ))}
        </Apps>
        <TrayArea />
      </Taskbar>
    </Desktop>
  );
}
